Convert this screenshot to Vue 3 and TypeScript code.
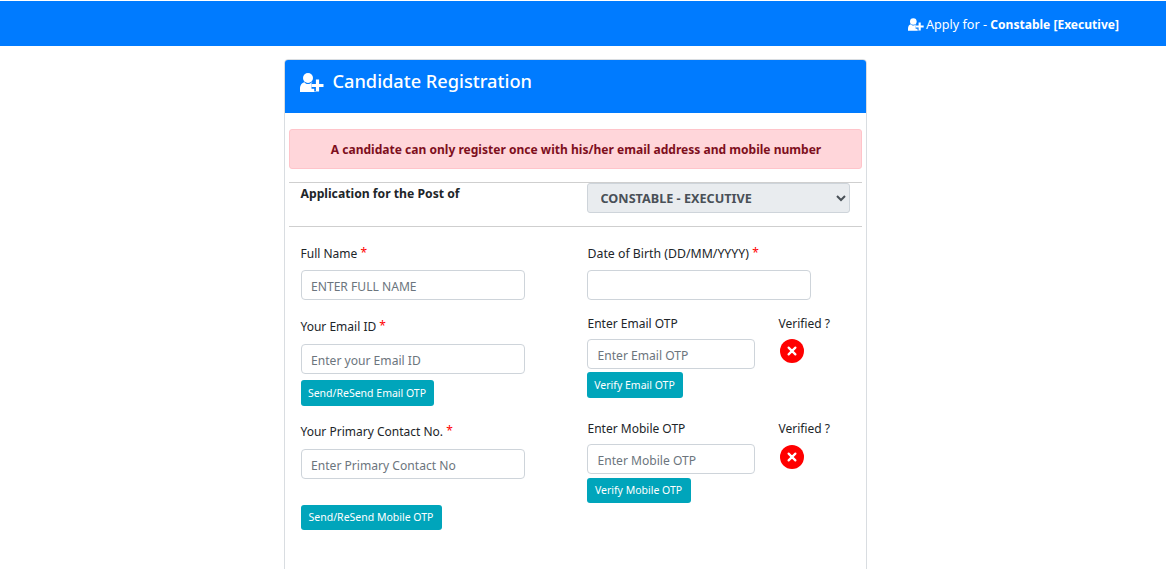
<script setup lang="ts">
import { ref } from 'vue'

const post = ref('CONSTABLE - EXECUTIVE')
const bodyPath = 'M0 19v-3.2C0 12 2 9.6 4.4 9.2 5.4 10.500 6.600 11 8 11s2.600-.5 3.600-1.800c1.600.3 3 1.300 3.800 2.800L16 19z'
const plusPath = 'M11.500 12.500h12M17.500 6.500v12'
</script>

<template>
  <div class="page">
    <header class="topbar">
      <svg class="bar-icon" viewBox="0 0 24 19">
        <circle cx="8" cy="5" r="5" fill="#fff" />
        <path :d="bodyPath" fill="#fff" />
        <path :d="plusPath" stroke="#007bff" stroke-width="6.500" />
        <path :d="plusPath" stroke="#fff" stroke-width="3.200" />
      </svg>
      <span class="apply">Apply for - <b>Constable [Executive]</b></span>
    </header>

    <main class="card">
      <div class="card-head">
        <svg class="head-icon" viewBox="0 0 24 19">
          <circle cx="8" cy="5" r="5" fill="#fff" />
          <path :d="bodyPath" fill="#fff" />
          <path :d="plusPath" stroke="#007bff" stroke-width="6.500" />
          <path :d="plusPath" stroke="#fff" stroke-width="3.200" />
        </svg>
        <h1>Candidate Registration</h1>
      </div>

      <div class="card-body">
        <div class="alert">A candidate can only register once with his/her email address and mobile number</div>

        <div class="post-row">
          <div class="post-label">Application for the Post of</div>
          <select v-model="post" class="post-select" disabled>
            <option>CONSTABLE - EXECUTIVE</option>
          </select>
        </div>

        <div class="form-grid">
          <div class="field first">
            <label>Full Name <i>*</i></label>
            <input type="text" placeholder="ENTER FULL NAME" />
          </div>
          <div class="field first">
            <label class="shifted dob">Date of Birth (DD/MM/YYYY) <i>*</i></label>
            <input type="text" />
          </div>

          <div class="field second">
            <label>Your Email ID <i>*</i></label>
            <input type="text" placeholder="Enter your Email ID" />
            <button type="button" class="btn send-email">Send/ReSend Email OTP</button>
          </div>
          <div class="otp-row">
            <div class="otp">
              <label class="shifted">Enter Email OTP</label>
              <input type="text" placeholder="Enter Email OTP" />
              <button type="button" class="btn verify-email">Verify Email OTP</button>
            </div>
            <div class="verified">
              <span>Verified ?</span>
              <svg class="cross" viewBox="0 0 24 24">
                <circle cx="12" cy="12" r="12" fill="#ff0000" />
                <path d="M8.600 8.600l6.800 6.800M15.400 8.600l-6.800 6.800" stroke="#fff" stroke-width="2.200" stroke-linecap="round" />
              </svg>
            </div>
          </div>

          <div class="field third">
            <label>Your Primary Contact No. <i>*</i></label>
            <input type="text" placeholder="Enter Primary Contact No" />
            <button type="button" class="btn send-mobile">Send/ReSend Mobile OTP</button>
          </div>
          <div class="otp-row">
            <div class="otp">
              <label class="shifted">Enter Mobile OTP</label>
              <input type="text" placeholder="Enter Mobile OTP" />
              <button type="button" class="btn verify-mobile">Verify Mobile OTP</button>
            </div>
            <div class="verified">
              <span>Verified ?</span>
              <svg class="cross low" viewBox="0 0 24 24">
                <circle cx="12" cy="12" r="12" fill="#ff0000" />
                <path d="M8.600 8.600l6.800 6.800M15.400 8.600l-6.800 6.800" stroke="#fff" stroke-width="2.200" stroke-linecap="round" />
              </svg>
            </div>
          </div>
        </div>
      </div>
    </main>
  </div>
</template>

<style>
html, body { margin: 0; overflow: hidden; background: #fff; }
</style>

<style scoped>
.page {
  height: 569px;
  overflow: hidden;
  font-family: "Noto Sans", "Open Sans", sans-serif;
  font-size: 12px;
  color: #212529;
  padding-top: 1px;
  box-sizing: border-box;
}
.topbar {
  height: 45px;
  box-sizing: border-box;
  padding-top: 1px;
  background: #007bff;
  color: #fff;
  display: flex;
  align-items: center;
  justify-content: flex-end;
  padding-right: 47px;
  font-size: 12.6px;
}
.bar-icon { width: 16px; height: 13px; margin-right: 2px; }
.apply b { font-weight: 700; font-size: 12.05px; }
.card {
  width: 581px;
  margin: 13px auto 0;
  transform: translateX(-8px);
  border: 1px solid #d9dde1;
  border-radius: 4px;
  height: 700px;
}
.card-head {
  height: 53px;
  background: #007bff;
  color: #fff;
  display: flex;
  align-items: flex-start;
  padding: 11px 0 0 15px;
  box-sizing: border-box;
  border-radius: 3px 3px 0 0;
}
.head-icon { width: 24px; height: 19px; margin: 2px 9px 0 0; }
h1 { margin: 0; font-size: 18.2px; line-height: 20px; font-weight: 500; }
.card-body { padding: 16px 4px 0; }
.alert {
  height: 40px;
  box-sizing: border-box;
  border: 1px solid #ffc4ca;
  background: #ffd6da;
  color: #7e0f1d;
  border-radius: 3px;
  font-weight: 700;
  font-size: 12.05px;
  text-align: center;
  line-height: 40px;
  padding-left: 2px;
}
.post-row {
  margin-top: 13px;
  height: 45px;
  box-sizing: border-box;
  border-top: 1px solid #cfcfcf;
  border-bottom: 1px solid #cfcfcf;
  display: grid;
  grid-template-columns: 286px 263px;
  padding-left: 12px;
}
.post-label { font-weight: 700; font-size: 12.2px; line-height: 21px; }
.post-select {
  height: 30px;
  border: 1px solid #ced4da;
  border-radius: 3px;
  background: #e9ecef;
  color: #495057;
  font: 700 12.65px "Noto Sans", sans-serif;
  padding-left: 9px;
  opacity: 1;
}
.form-grid {
  display: grid;
  grid-template-columns: 286px 262px;
  padding-left: 12px;
}
label { display: block; font-size: 12px; line-height: 18px; }
label.shifted { padding-left: 1px; }
label.dob { font-size: 12.3px; }
label i { color: #ff0000; font-style: normal; font-size: 12px; vertical-align: 1px; }
input {
  display: block;
  box-sizing: border-box;
  height: 30px;
  width: 224px;
  border: 1px solid #ced4da;
  border-radius: 4px;
  padding: 2px 9.500px 0;
  font: 12.1px "Noto Sans", sans-serif;
  background: #fff;
  outline: none;
}
input::placeholder { color: #6c757d; opacity: 1; }
.field label { margin-bottom: 7px; }
.first { padding-top: 17px; height: 73px; box-sizing: content-box; }
.second { height: 105px; }
.field.second label, .field.third label { margin-bottom: 8px; }
.third { height: 120px; }
.btn {
  display: block;
  border: none;
  background: #00a5bb;
  color: #fff;
  border-radius: 3px;
  font: 10.5px "Noto Sans", sans-serif;
  height: 26px;
  padding: 0;
}
.send-email { margin-top: 6px; width: 133px; }
.send-mobile { margin-top: 26px; width: 141px; height: 25px; padding-bottom: 1px; }
.otp-row { display: flex; margin-top: -2px; }
.otp { width: 192px; }
.otp label { margin-bottom: 6px; }
.otp input { width: 168px; padding-left: 10px; }
.verify-email { margin-top: 3px; width: 96px; }
.verify-mobile { margin-top: 4px; width: 104px; height: 25px; padding-bottom: 1px; }
.verified span { display: block; font-size: 12px; line-height: 18px; }
.cross { display: block; width: 24px; height: 24px; margin: 6px 0 0 1px; }
.cross.low { margin-top: 7px; }
</style>
